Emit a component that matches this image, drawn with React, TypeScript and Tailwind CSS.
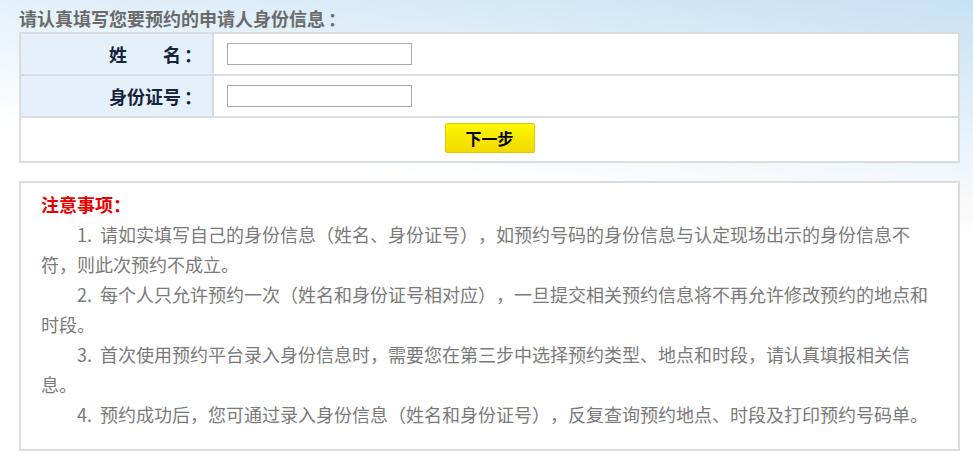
import React from "react";

const font = {
  fontFamily: '"Noto Sans CJK SC", "Noto Sans", sans-serif',
};

const notes = [
  "1.\u00a0\u00a0请如实填写自己的身份信息（姓名、身份证号），如预约号码的身份信息与认定现场出示的身份信息不符，则此次预约不成立。",
  "2.\u00a0\u00a0每个人只允许预约一次（姓名和身份证号相对应），一旦提交相关预约信息将不再允许修改预约的地点和时段。",
  "3.\u00a0\u00a0首次使用预约平台录入身份信息时，需要您在第三步中选择预约类型、地点和时段，请认真填报相关信息。",
  "4.\u00a0\u00a0预约成功后，您可通过录入身份信息（姓名和身份证号），反复查询预约地点、时段及打印预约号码单。",
];

function FieldRow({ label }: { label: React.ReactNode }) {
  return (
    <div className="flex h-[42px] border-b-2 border-[#d9dde2]">
      <div className="flex w-[193px] items-center justify-end border-r-2 border-[#cfdcea] bg-[#e5f0fb] pr-[10px] text-[18px] font-bold text-[#17233a]">
        {label}
      </div>
      <div className="flex flex-1 items-center bg-white pl-[13px]">
        <input
          type="text"
          className="h-[22px] w-[185px] border border-[#a9a9a9] bg-white outline-none"
        />
      </div>
    </div>
  );
}

export default function App() {
  return (
    <div
      className="min-h-[469px] w-full bg-[linear-gradient(187deg,#c6e1f4_0%,#e6f2fb_22%,#ffffff_42%)] pl-[19px] pt-[4px] [text-spacing-trim:space-all]"
      style={font}
    >
      <div className="h-[28px] text-[18px] font-bold leading-[28px] text-[#6b6b6b]">
        请认真填写您要预约的申请人身份信息<span className="ml-[3px]">：</span>
      </div>

      <div className="w-[941px] border-2 border-b-0 border-[#d9dde2] bg-white">
        <FieldRow
          label={
            <span>
              姓<span className="inline-block w-[36px]" />名<span className="ml-[3px]">：</span>
            </span>
          }
        />
        <FieldRow
          label={
            <span>
              身份证号<span className="ml-[3px]">：</span>
            </span>
          }
        />
        <div className="flex h-[45px] justify-center border-b-2 border-[#d9dde2] pt-[5px]">
          <button
            type="button"
            className="h-[30px] w-[90px] rounded-[2px] border border-[#e2c600] bg-[linear-gradient(#fbf700,#f2d900)] text-[16px] font-bold leading-[28px] text-black"
          >
            下一步
          </button>
        </div>
      </div>

      <div className="mt-[18px] w-[941px] border-2 border-[#dcdcdc] bg-white pb-[20px] pl-[20px] pr-[24px] pt-[6px]">
        <div className="text-[18px] font-bold leading-[30px] text-[#e60000]">注意事项：</div>
        {notes.map((n) => (
          <p key={n} className="indent-[36px] text-[18px] leading-[30px] text-[#7a7a7a]">
            {n}
          </p>
        ))}
      </div>
    </div>
  );
}
